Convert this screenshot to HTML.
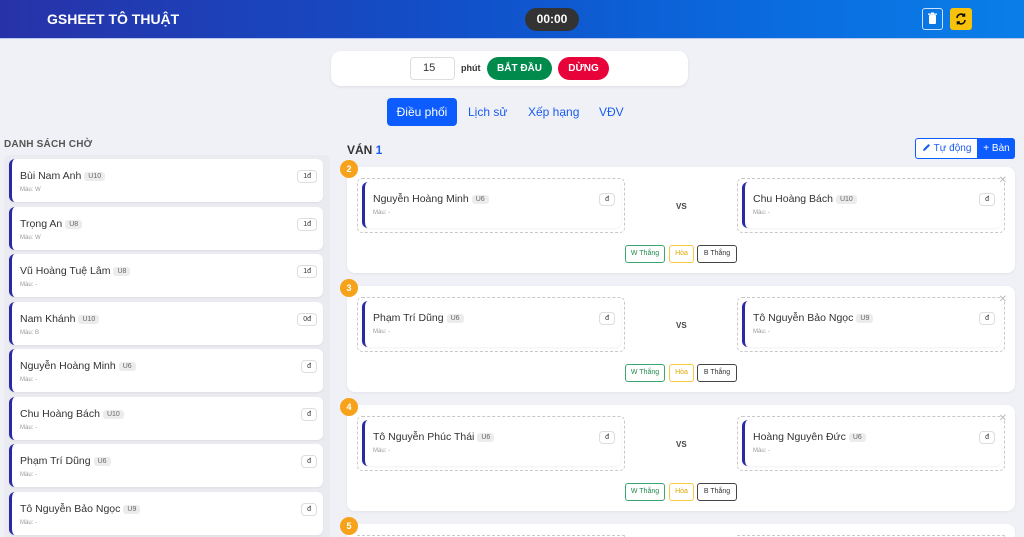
<!DOCTYPE html>
<html><head><meta charset="utf-8"><style>
*{box-sizing:border-box;margin:0;padding:0}
html,body{width:1024px;height:537px;overflow:hidden}
body{background:#f0f1f6;font-family:"Liberation Sans",sans-serif;position:relative;color:#333}
.hdr{position:absolute;left:0;top:0;width:1024px;height:39px;background:linear-gradient(90deg,#2832a8 0%,#1150c9 45%,#0a6bde 75%,#0a7ee8 100%);border-bottom:1px solid #b8c8ee}
.title{position:absolute;left:47px;top:11px;color:#fff;font-size:14px;font-weight:bold}
.timer{position:absolute;left:525px;top:8px;width:54px;height:23px;border-radius:12px;background:#333;color:#fff;font-weight:bold;font-size:12px;text-align:center;line-height:23px}
.ib{position:absolute;top:8px;width:21px;height:22px;border-radius:3px}
.ctrl{position:absolute;left:331px;top:51px;width:357px;height:35px;background:#fff;border-radius:10px;box-shadow:0 1px 3px rgba(0,0,0,.08)}
.pill{position:absolute;top:57px;height:23px;border-radius:12px;color:#fff;font-size:10px;font-weight:bold;text-align:center;line-height:23px}
.tab{position:absolute;top:98px;height:28px;line-height:28px;font-size:12px;color:#1a5cf0}
.lh{position:absolute;left:4px;top:139px;font-size:10px;color:#555;font-weight:bold;letter-spacing:.2px}
.lwrap{position:absolute;left:4px;top:155px;width:326px;height:382px;background:#eaebf1;border-radius:6px 6px 0 0}
.card{position:absolute;background:#fff;border-radius:6px;border-left:3px solid #2b2aa3;box-shadow:0 1px 2px rgba(0,0,0,.06)}
.nm{position:absolute;left:8px;top:11px;font-size:10.5px;color:#333;white-space:nowrap}
.bd{display:inline-block;background:#ececec;color:#666;font-size:7px;padding:1px 4px;border-radius:3px;margin-left:3px;vertical-align:1px}
.mu{position:absolute;left:8px;top:28px;font-size:6px;color:#999}
.tg{position:absolute;right:6px;top:11px;height:13px;padding:0 5px;border:1px solid #ddd;border-radius:4px;font-size:7px;line-height:11px;color:#333;background:#fff}
.van{position:absolute;left:347px;top:143px;font-size:12px;font-weight:bold;color:#333}
.board{position:absolute;left:347px;width:668px;height:106px;background:#fff;border-radius:8px;box-shadow:0 1px 3px rgba(0,0,0,.06)}
.num{position:absolute;left:-7px;top:-7px;width:18px;height:18px;border-radius:50%;background:#f7a21b;color:#fff;font-size:9px;font-weight:bold;text-align:center;line-height:18px}
.slot{position:absolute;top:11px;width:268px;height:55px;border:1.5px dashed #c8c8c8;border-radius:5px}
.slot .card{left:4px;top:3px;width:259px;height:46px}
.vs{position:absolute;left:329px;top:35px;font-size:8px;font-weight:bold;color:#444}
.x{position:absolute;right:8px;top:8px;font-size:10px;color:#bbb}
.rb{position:absolute;top:78px;height:18px;border-radius:3px;font-size:7px;line-height:16px;text-align:center;background:#fff}
</style></head><body>
<div class="hdr">
<div class="title">GSHEET TÔ THUẬT</div>
<div class="timer">00:00</div>
<div class="ib" style="left:922px;border:1px solid #cfe0ff">
<svg width="19" height="20" viewBox="0 0 19 20"><rect x="6" y="6" width="7" height="9" rx="1" fill="#fff"/><rect x="5" y="4.5" width="9" height="1.3" fill="#fff"/><rect x="8" y="3.5" width="3" height="1.2" fill="#fff"/></svg></div>
<div class="ib" style="left:950px;background:#f9c20a;width:22px">
<svg width="22" height="22" viewBox="0 0 22 22" fill="none" stroke="#111" stroke-width="1.6"><path d="M7 10a4 4 0 0 1 7-2.5M15 12a4 4 0 0 1-7 2.5"/><path d="M14.5 5.5v2.5h-2.5M7.5 16.5v-2.5h2.5"/></svg></div>
</div>
<div class="ctrl"></div>
<div style="position:absolute;left:410px;top:57px;width:45px;height:23px;border:1px solid #ddd;border-radius:4px;background:#fff;font-size:11px;line-height:21px;padding-left:12px">15</div>
<div style="position:absolute;left:461px;top:63px;font-size:9px;font-weight:bold;color:#333">phút</div>
<div class="pill" style="left:487px;width:65px;background:#008a4c">BẮT ĐẦU</div>
<div class="pill" style="left:558px;width:51px;background:#e8023a">DỪNG</div>
<div class="tab" style="left:387px;width:70px;background:#0d5cff;color:#fff;border-radius:4px;text-align:center">Điều phối</div>
<div class="tab" style="left:468px">Lịch sử</div>
<div class="tab" style="left:528px">Xếp hạng</div>
<div class="tab" style="left:599px">VĐV</div>

<div class="lh">DANH SÁCH CHỜ</div>
<div class="lwrap"></div>
<div class="card" style="left:9px;top:159px;width:314px;height:43px"><div class="nm">Bùi Nam Anh<span class="bd">U10</span></div><div class="mu">Màu: W</div><div class="tg">1đ</div></div>
<div class="card" style="left:9px;top:207px;width:314px;height:43px"><div class="nm">Trọng An<span class="bd">U8</span></div><div class="mu">Màu: W</div><div class="tg">1đ</div></div>
<div class="card" style="left:9px;top:254px;width:314px;height:43px"><div class="nm">Vũ Hoàng Tuệ Lâm<span class="bd">U8</span></div><div class="mu">Màu: -</div><div class="tg">1đ</div></div>
<div class="card" style="left:9px;top:302px;width:314px;height:43px"><div class="nm">Nam Khánh<span class="bd">U10</span></div><div class="mu">Màu: B</div><div class="tg">0đ</div></div>
<div class="card" style="left:9px;top:349px;width:314px;height:43px"><div class="nm">Nguyễn Hoàng Minh<span class="bd">U6</span></div><div class="mu">Màu: -</div><div class="tg">đ</div></div>
<div class="card" style="left:9px;top:397px;width:314px;height:43px"><div class="nm">Chu Hoàng Bách<span class="bd">U10</span></div><div class="mu">Màu: -</div><div class="tg">đ</div></div>
<div class="card" style="left:9px;top:444px;width:314px;height:43px"><div class="nm">Phạm Trí Dũng<span class="bd">U6</span></div><div class="mu">Màu: -</div><div class="tg">đ</div></div>
<div class="card" style="left:9px;top:492px;width:314px;height:43px"><div class="nm">Tô Nguyễn Bảo Ngọc<span class="bd">U9</span></div><div class="mu">Màu: -</div><div class="tg">đ</div></div>

<div class="van">VÁN <span style="color:#1a5cf0">1</span></div>
<div style="position:absolute;left:915px;top:138px;width:63px;height:21px;border:1px solid #0d5cff;border-radius:3px 0 0 3px;background:#fff;color:#1a5cf0;font-size:10px;line-height:19px;padding-left:6px"><svg width="9" height="9" viewBox="0 0 9 9" style="vertical-align:-1px"><path d="M1 8l.5-2L6.5 1l1.5 1.5L3 7.5z" fill="#1a5cf0"/></svg> Tự động</div>
<div style="position:absolute;left:978px;top:138px;width:37px;height:21px;background:#0d5cff;border-radius:0 3px 3px 0;color:#fff;font-size:10px;line-height:21px;text-align:center">+ Bàn</div>

<div class="board" style="top:167px"><div class="num">2</div>
<div class="slot" style="left:10px"><div class="card"><div class="nm">Nguyễn Hoàng Minh<span class="bd">U6</span></div><div class="mu">Màu: -</div><div class="tg">đ</div></div></div>
<div class="vs">VS</div>
<div class="slot" style="left:390px"><div class="card"><div class="nm">Chu Hoàng Bách<span class="bd">U10</span></div><div class="mu">Màu: -</div><div class="tg">đ</div></div></div>
<div class="x">✕</div>
<div class="rb" style="left:278px;width:40px;border:1px solid #3aa771;color:#1f8a50">W Thắng</div>
<div class="rb" style="left:322px;width:25px;border:1px solid #f7c843;color:#e0a800">Hòa</div>
<div class="rb" style="left:350px;width:40px;border:1px solid #444;color:#333">B Thắng</div>
</div>

<div class="board" style="top:286px"><div class="num">3</div>
<div class="slot" style="left:10px"><div class="card"><div class="nm">Phạm Trí Dũng<span class="bd">U6</span></div><div class="mu">Màu: -</div><div class="tg">đ</div></div></div>
<div class="vs">VS</div>
<div class="slot" style="left:390px"><div class="card"><div class="nm">Tô Nguyễn Bảo Ngọc<span class="bd">U9</span></div><div class="mu">Màu: -</div><div class="tg">đ</div></div></div>
<div class="x">✕</div>
<div class="rb" style="left:278px;width:40px;border:1px solid #3aa771;color:#1f8a50">W Thắng</div>
<div class="rb" style="left:322px;width:25px;border:1px solid #f7c843;color:#e0a800">Hòa</div>
<div class="rb" style="left:350px;width:40px;border:1px solid #444;color:#333">B Thắng</div>
</div>

<div class="board" style="top:405px"><div class="num">4</div>
<div class="slot" style="left:10px"><div class="card"><div class="nm">Tô Nguyễn Phúc Thái<span class="bd">U6</span></div><div class="mu">Màu: -</div><div class="tg">đ</div></div></div>
<div class="vs">VS</div>
<div class="slot" style="left:390px"><div class="card"><div class="nm">Hoàng Nguyên Đức<span class="bd">U6</span></div><div class="mu">Màu: -</div><div class="tg">đ</div></div></div>
<div class="x">✕</div>
<div class="rb" style="left:278px;width:40px;border:1px solid #3aa771;color:#1f8a50">W Thắng</div>
<div class="rb" style="left:322px;width:25px;border:1px solid #f7c843;color:#e0a800">Hòa</div>
<div class="rb" style="left:350px;width:40px;border:1px solid #444;color:#333">B Thắng</div>
</div>

<div class="board" style="top:524px;height:13px;border-radius:8px 8px 0 0"><div class="num">5</div>
<div class="slot" style="left:10px;height:2px;border-bottom:none"></div><div class="slot" style="left:390px;height:2px;border-bottom:none"></div></div>
</body></html>
